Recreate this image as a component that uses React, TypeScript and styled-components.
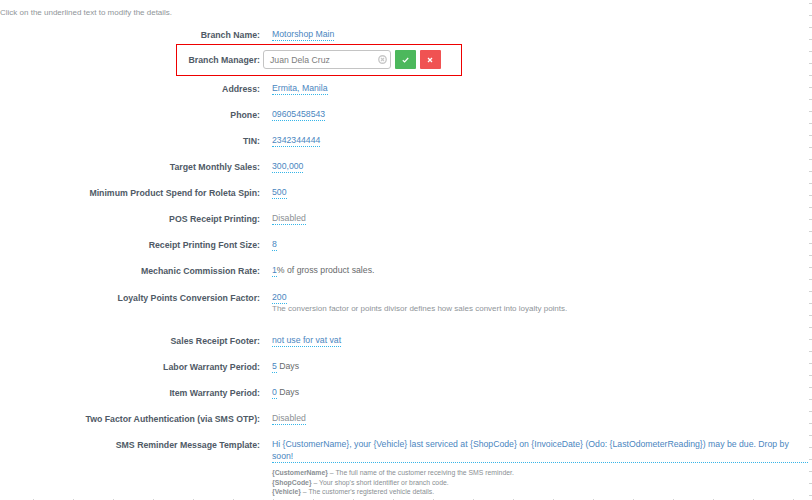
import React from "react";
import styled, { createGlobalStyle } from "styled-components";

const Global = createGlobalStyle`
  html, body { margin: 0; padding: 0; background: #fff; overflow: hidden; height: 500px; }
  body { font-family: "Liberation Sans", Arial, sans-serif; font-size: 8.7px; color: #676a6c; }
`;

const Page = styled.div`
  width: 812px;
  height: 500px;
  overflow: hidden;
  background-color: #fff;
  background-image:
    linear-gradient(to bottom, #d2d2d2 1px, transparent 1px),
    linear-gradient(to right, #d2d2d2 1px, transparent 1px);
  background-repeat: repeat-y, repeat-x;
  background-size: 3px 12px, 40px 1px;
  background-position: right 0 top 3px, 33px bottom;
`;

const Hint = styled.p`
  margin: 0;
  padding-top: 7px;
  height: 20.5px;
  font-size: 8px;
  line-height: 11px;
  color: #8f9599;
`;

const Form = styled.div`
  display: flex;
  flex-direction: column;
`;

const Row = styled.div<{ $h?: number }>`
  display: grid;
  grid-template-columns: 260px 1fr;
  column-gap: 12px;
  height: ${(p) => p.$h ?? 26.125}px;
  align-items: start;
`;

const Label = styled.label`
  justify-self: end;
  font-weight: 700;
  font-size: 8.75px;
  line-height: 13px;
  padding-top: 1px;
  color: #4f5a66;
  white-space: nowrap;
`;

const Value = styled.div`
  font-size: 8.7px;
  line-height: 13px;
  color: #676a6c;
`;

const Editable = styled.span<{ $muted?: boolean }>`
  color: ${(p) => (p.$muted ? "#8a8f93" : "#4a86c0")};
  border-bottom: 1px dotted #35b5e8;
  display: inline-block;
  line-height: 12px;
`;

const Block = styled.div`
  color: #4a86c0;
  border-bottom: 1px dotted #35b5e8;
  line-height: 12px;
  width: 536px;
`;

const Help = styled.div`
  font-size: 8px;
  line-height: 11px;
  margin-top: -1px;
  color: #8f9599;
`;

const VarList = styled.div`
  font-size: 6.85px;
  line-height: 9.7px;
  color: #8a8f93;
  padding-top: 5px;
`;

const EditBox = styled.div`
  margin: 0 0 6px 176px;
  width: 285.5px;
  height: 32px;
  box-sizing: border-box;
  border: 1px solid #ee0000;
  display: flex;
  align-items: center;
  padding-left: 11.5px;
`;

const EditLabel = styled.span`
  font-weight: 700;
  font-size: 8.75px;
  color: #4f5a66;
  width: 71px;
  text-align: right;
  white-space: nowrap;
`;

const Input = styled.div`
  margin-left: 3.5px;
  box-sizing: border-box;
  width: 127.5px;
  height: 19px;
  border: 1px solid #c4c4c4;
  border-radius: 3px;
  display: flex;
  align-items: center;
  justify-content: space-between;
  padding: 0 3px 0 6px;
  font-size: 8.7px;
  color: #7d7d7d;
`;

const ActionButton = styled.button<{ $bg: string; $gap: number }>`
  width: 21px;
  height: 19px;
  margin-left: ${(p) => p.$gap}px;
  padding: 0;
  border: 0;
  border-radius: 1px;
  background: ${(p) => p.$bg};
  display: flex;
  align-items: center;
  justify-content: center;
`;

const Strong = styled.b`
  font-weight: 700;
`;

const Clear = () => (
  <svg width="9" height="9" viewBox="0 0 12 12">
    <circle cx="6" cy="6" r="5" fill="none" stroke="#c8c8c8" strokeWidth="1.8" />
    <path d="M4 4l4 4M8 4l-4 4" stroke="#c8c8c8" strokeWidth="1.6" />
  </svg>
);

const Check = () => (
  <svg width="7" height="6" viewBox="0 0 7 6">
    <path d="M.8 3.2l1.8 1.7L6.2 1" fill="none" stroke="#fff" strokeWidth="1.2" />
  </svg>
);

const Cross = () => (
  <svg width="6" height="6" viewBox="0 0 6 6">
    <path d="M1 1l4 4M5 1L1 5" fill="none" stroke="#fff" strokeWidth="1.3" />
  </svg>
);

const F: React.FC<{ label: string; h?: number; children: React.ReactNode }> = ({ label, h, children }) => (
  <Row $h={h}>
    <Label>{label}</Label>
    <Value>{children}</Value>
  </Row>
);

const template =
  "Hi {CustomerName}, your {Vehicle} last serviced at {ShopCode} on {InvoiceDate} (Odo: {LastOdometerReading}) may be due. Drop by soon!";

export default function App() {
  return (
    <Page>
      <Global />
      <Hint>Click on the underlined text to modify the details.</Hint>
      <Form>
        <F label="Branch Name:" h={16}><Editable>Motorshop Main</Editable></F>
        <EditBox>
          <EditLabel>Branch Manager:</EditLabel>
          <Input>Juan Dela Cruz<Clear /></Input>
          <ActionButton $bg="#4cb85c" $gap={4}><Check /></ActionButton>
          <ActionButton $bg="#f05252" $gap={4}><Cross /></ActionButton>
        </EditBox>
        <F label="Address:"><Editable>Ermita, Manila</Editable></F>
        <F label="Phone:"><Editable>09605458543</Editable></F>
        <F label="TIN:"><Editable>2342344444</Editable></F>
        <F label="Target Monthly Sales:"><Editable>300,000</Editable></F>
        <F label="Minimum Product Spend for Roleta Spin:"><Editable>500</Editable></F>
        <F label="POS Receipt Printing:"><Editable $muted>Disabled</Editable></F>
        <F label="Receipt Printing Font Size:"><Editable>8</Editable></F>
        <F label="Mechanic Commission Rate:"><Editable>1</Editable>% of gross product sales.</F>
        <F label="Loyalty Points Conversion Factor:" h={43}>
          <Editable>200</Editable>
          <Help>The conversion factor or points divisor defines how sales convert into loyalty points.</Help>
        </F>
        <F label="Sales Receipt Footer:"><Editable>not use for vat vat</Editable></F>
        <F label="Labor Warranty Period:"><Editable>5</Editable> Days</F>
        <F label="Item Warranty Period:"><Editable>0</Editable> Days</F>
        <F label="Two Factor Authentication (via SMS OTP):"><Editable $muted>Disabled</Editable></F>
        <F label="SMS Reminder Message Template:" h={62}>
          <Block>{template}</Block>
          <VarList>
            <div><Strong>{"{CustomerName}"}</Strong> – The full name of the customer receiving the SMS reminder.</div>
            <div><Strong>{"{ShopCode}"}</Strong> – Your shop's short identifier or branch code.</div>
            <div><Strong>{"{Vehicle}"}</Strong> – The customer's registered vehicle details.</div>
          </VarList>
        </F>
      </Form>
    </Page>
  );
}
